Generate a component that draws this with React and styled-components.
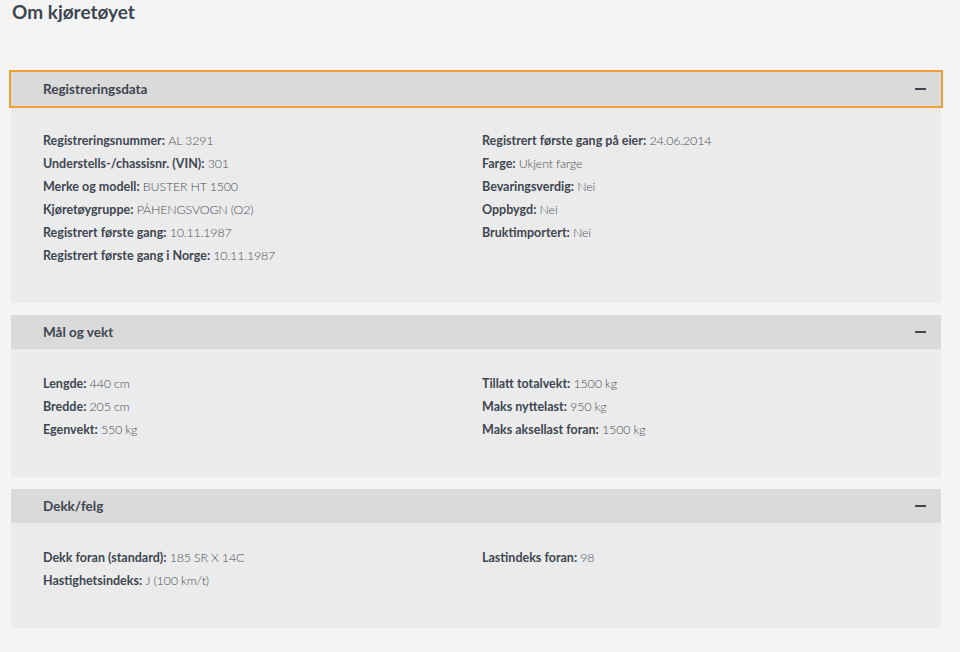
import React from "react";
import styled, { createGlobalStyle } from "styled-components";

const GlobalStyle = createGlobalStyle`
  body {
    margin: 0;
    background: #f4f4f4;
    font-family: Lato, "Open Sans", sans-serif;
    color: #3d4650;
  }
`;

const sections = [
  {
    title: "Registreringsdata",
    focused: true,
    left: [
      ["Registreringsnummer", "AL 3291"],
      ["Understells-/chassisnr. (VIN)", "301"],
      ["Merke og modell", "BUSTER HT 1500"],
      ["Kjøretøygruppe", "PÅHENGSVOGN (O2)"],
      ["Registrert første gang", "10.11.1987"],
      ["Registrert første gang i Norge", "10.11.1987"],
    ],
    right: [
      ["Registrert første gang på eier", "24.06.2014"],
      ["Farge", "Ukjent farge"],
      ["Bevaringsverdig", "Nei"],
      ["Oppbygd", "Nei"],
      ["Bruktimportert", "Nei"],
    ],
  },
  {
    title: "Mål og vekt",
    left: [
      ["Lengde", "440 cm"],
      ["Bredde", "205 cm"],
      ["Egenvekt", "550 kg"],
    ],
    right: [
      ["Tillatt totalvekt", "1500 kg"],
      ["Maks nyttelast", "950 kg"],
      ["Maks aksellast foran", "1500 kg"],
    ],
  },
  {
    title: "Dekk/felg",
    left: [
      ["Dekk foran (standard)", "185 SR X 14C"],
      ["Hastighetsindeks", "J (100 km/t)"],
    ],
    right: [["Lastindeks foran", "98"]],
  },
];

export default function App() {
  return (
    <>
      <GlobalStyle />
      <Page>
        <Title>Om kjøretøyet</Title>
        <Panels>
          {sections.map((s) => (
            <Panel key={s.title}>
              <Header $focused={s.focused}>
                <span>{s.title}</span>
                <Minus />
              </Header>
              <Body>
                <Column>
                  {s.left.map(([k, v]) => (
                    <Row key={k}>
                      <Label>{k}:</Label> <Value>{v}</Value>
                    </Row>
                  ))}
                </Column>
                <Column>
                  {s.right.map(([k, v]) => (
                    <Row key={k}>
                      <Label>{k}:</Label> <Value>{v}</Value>
                    </Row>
                  ))}
                </Column>
              </Body>
            </Panel>
          ))}
        </Panels>
      </Page>
    </>
  );
}

const Page = styled.div`
  padding: 0 19px 0 11px;
`;

const Title = styled.h2`
  margin: 0;
  padding: 0 0 0 1px;
  font-size: 19px;
  font-weight: 700;
  line-height: 24px;
  color: #3d4650;
`;

const Panels = styled.div`
  margin-top: 48px;
  display: flex;
  flex-direction: column;
  gap: 12px;
`;

const Panel = styled.section`
  background: #ebebeb;
`;

const Header = styled.div`
  display: flex;
  align-items: center;
  justify-content: space-between;
  height: 34px;
  padding: 0 15px 0 32px;
  background: #dadada;
  font-size: 13.5px;
  font-weight: 700;
  color: #3d4650;
  outline: ${(p) => (p.$focused ? "2px solid #f0a033" : "none")};
  outline-offset: 0;
`;

const Minus = styled.span`
  width: 11px;
  height: 2px;
  background: #3d4650;
`;

const Body = styled.div`
  display: grid;
  grid-template-columns: 1fr 1fr;
  column-gap: 12px;
  padding: 23px 32px 36px;
`;

const Column = styled.div`
  display: flex;
  flex-direction: column;
`;

const Row = styled.div`
  font-size: 12.5px;
  line-height: 23px;
`;

const Label = styled.span`
  font-weight: 700;
  color: #3d4650;
`;

const Value = styled.span`
  font-weight: 300;
  color: #4a5056;
  letter-spacing: -0.2px;
`;
